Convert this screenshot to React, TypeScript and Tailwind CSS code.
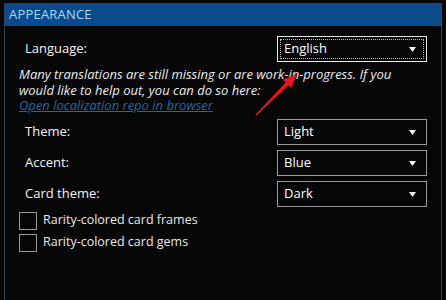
const font = { fontFamily: '"Open Sans", "Noto Sans", sans-serif' };

const Select = ({ value, focused }: { value: string; focused?: boolean }) => (
	<div
		className={`relative w-[150px] h-[26px] border flex items-center pl-[6px] pr-[10px] ${
			focused ? "border-[#e8e8e8]" : "border-[#9a9a9a]"
		}`}
	>
		{focused && (
			<div className="absolute inset-[2px] border border-dotted border-[#bdbdbd]"></div>
		)}
		<span className="text-[13px] text-white flex-1">{value}</span>
		<svg width="7" height="5" viewBox="0 0 7 5" className="mt-[1px]">
			<path d="M0 0 L7 0 L3.5 5 Z" fill="#f0f0f0" />
		</svg>
	</div>
);

const Row = ({ label, value, focused }: { label: string; value: string; focused?: boolean }) => (
	<div className="flex items-center justify-between pl-[20px] pr-[14px]">
		<span className="text-[13px] text-[#f2f2f2]">{label}</span>
		<Select value={value} focused={focused} />
	</div>
);

const Check = ({ label }: { label: string }) => (
	<div className="flex items-center gap-[6px] pl-[14px] h-[18px]">
		<div className="w-[18px] h-[18px] border border-[#9a9a9a]"></div>
		<span className="text-[12.5px] text-[#e8e8e8]">{label}</span>
	</div>
);

export default function App() {
	return (
		<main className="relative w-[446px] h-[300px] bg-[#050505] pt-[3px] pl-[4px] pr-[4px] overflow-hidden" style={font}>
			<div className="h-full border-l border-r border-[#2f4456] bg-[#070707]">
				<div className="h-[23px] bg-[#0b4b8c] flex items-center pl-[4px]">
					<span className="text-[13px] text-[#a6daf7] tracking-[0.2px]">APPEARANCE</span>
				</div>

				<div className="mt-[10px]">
					<Row label="Language:" value="English" focused />
				</div>

				<div className="pl-[14px] mt-[5px] text-[13px] leading-[15.5px] italic text-[#ececec]">
					<p>Many translations are still missing or are work-in-progress. If you</p>
					<p>would like to help out, you can do so here:</p>
					<a className="block text-[#1c6aa6] underline">Open localization repo in browser</a>
				</div>

				<div className="flex flex-col gap-[5px] mt-[5px]">
					<Row label="Theme:" value="Light" />
					<Row label="Accent:" value="Blue" />
					<Row label="Card theme:" value="Dark" />
				</div>

				<div className="flex flex-col gap-[4px] mt-[5px]">
					<Check label="Rarity-colored card frames" />
					<Check label="Rarity-colored card gems" />
				</div>
			</div>

			<svg className="absolute left-0 top-0 pointer-events-none" width="446" height="300">
				<path
					d="M297 74 L291.3 88.1 L288.5 85.3 L256.5 115.5 L255.5 114.5 L285.7 82.5 L282.9 79.7 Z"
					fill="#e3161c"
				/>
			</svg>
		</main>
	);
}
